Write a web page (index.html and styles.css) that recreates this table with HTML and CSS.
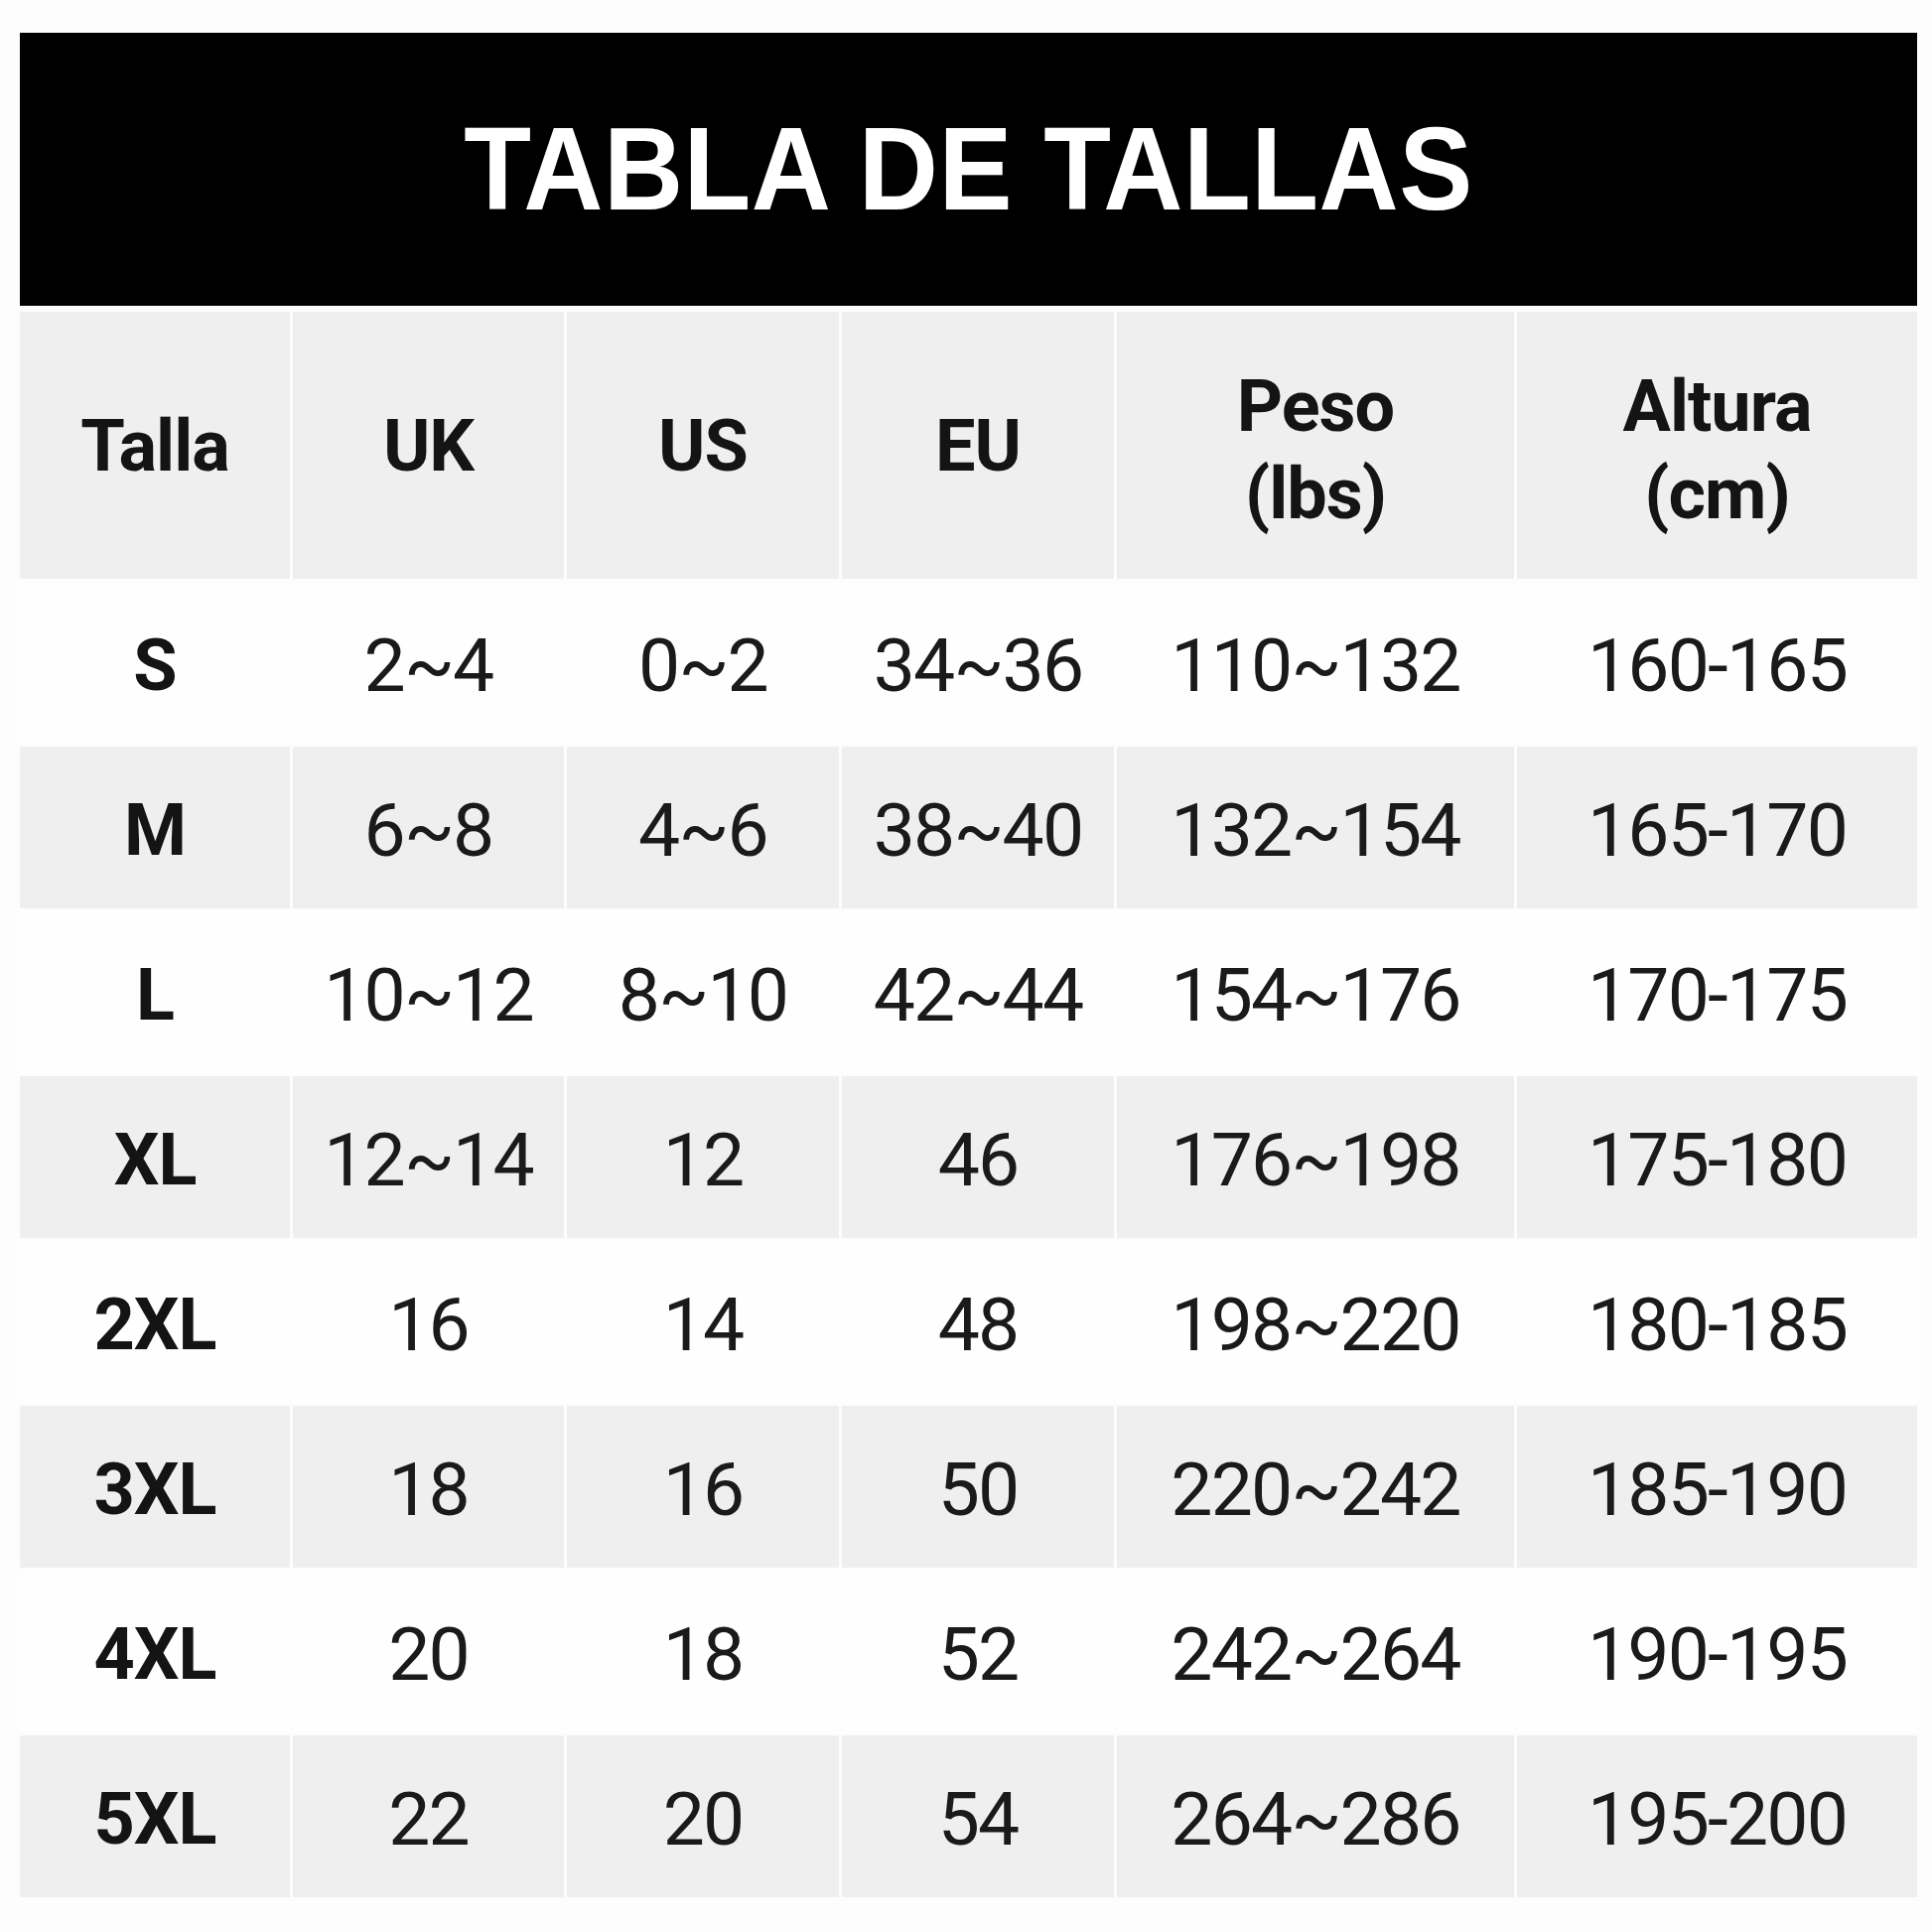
FILE: index.html
```html
<!DOCTYPE html>
<html lang="es">
<head>
<meta charset="utf-8">
<title>Tabla de tallas</title>
<link rel="stylesheet" href="styles.css">
</head>
<body>
<div class="page">
  <div class="banner"><h1 class="title">TABLA DE TALLAS</h1></div>
  <div class="table">
    <div class="cell head">Talla</div>
    <div class="cell head">UK</div>
    <div class="cell head">US</div>
    <div class="cell head">EU</div>
    <div class="cell head two">Peso<br>(lbs)</div>
    <div class="cell head two">Altura<br>(cm)</div>

    <div class="cell size">S</div><div class="cell">2~4</div><div class="cell">0~2</div><div class="cell">34~36</div><div class="cell">110~132</div><div class="cell">160-165</div>

    <div class="cell size alt">M</div><div class="cell alt">6~8</div><div class="cell alt">4~6</div><div class="cell alt">38~40</div><div class="cell alt">132~154</div><div class="cell alt">165-170</div>

    <div class="cell size">L</div><div class="cell">10~12</div><div class="cell">8~10</div><div class="cell">42~44</div><div class="cell">154~176</div><div class="cell">170-175</div>

    <div class="cell size alt">XL</div><div class="cell alt">12~14</div><div class="cell alt">12</div><div class="cell alt">46</div><div class="cell alt">176~198</div><div class="cell alt">175-180</div>

    <div class="cell size">2XL</div><div class="cell">16</div><div class="cell">14</div><div class="cell">48</div><div class="cell">198~220</div><div class="cell">180-185</div>

    <div class="cell size alt">3XL</div><div class="cell alt">18</div><div class="cell alt">16</div><div class="cell alt">50</div><div class="cell alt">220~242</div><div class="cell alt">185-190</div>

    <div class="cell size">4XL</div><div class="cell">20</div><div class="cell">18</div><div class="cell">52</div><div class="cell">242~264</div><div class="cell">190-195</div>

    <div class="cell size alt">5XL</div><div class="cell alt">22</div><div class="cell alt">20</div><div class="cell alt">54</div><div class="cell alt">264~286</div><div class="cell alt">195-200</div>
  </div>
</div>
</body>
</html>
```

FILE: styles.css
```css
html, body {
  margin: 0;
  padding: 0;
  background: #fdfdfd;
}

.page {
  width: 1911px;
  padding: 33px 0 0 20px;
  display: flex;
  flex-direction: column;
  gap: 6px;
}

.banner {
  height: 275px;
  background: #000;
  display: flex;
  align-items: center;
  justify-content: center;
}

.title {
  margin: 0;
  color: #fff;
  font-family: "Liberation Sans", Arial, sans-serif;
  font-weight: 700;
  font-size: 111px;
  line-height: 1;
  letter-spacing: 0.5px;
  transform: scaleY(1.07);
}

.table {
  display: grid;
  grid-template-columns: 272px 273px 274px 274px 400px 403px;
  grid-template-rows: 269px repeat(8, 163px);
  column-gap: 3px;
  row-gap: 3px;
}

.cell {
  display: flex;
  align-items: center;
  justify-content: center;
  text-align: center;
  padding-top: 6px;
  background: #fefefe;
  color: #1a1a1a;
  font-family: Roboto, "Liberation Sans", sans-serif;
  font-weight: 400;
  font-size: 75px;
  letter-spacing: -1.8px;
  line-height: 1;
}

.cell.alt {
  background: #efefef;
}

.cell.head {
  background: #efefef;
  font-weight: 700;
  color: #141414;
  font-size: 72px;
  letter-spacing: -1px;
  padding-top: 2px;
}

.cell.head.two {
  line-height: 1.22;
  padding-top: 10px;
}

.cell.size {
  font-weight: 700;
  color: #141414;
  font-size: 72px;
  letter-spacing: -1px;
}
```
